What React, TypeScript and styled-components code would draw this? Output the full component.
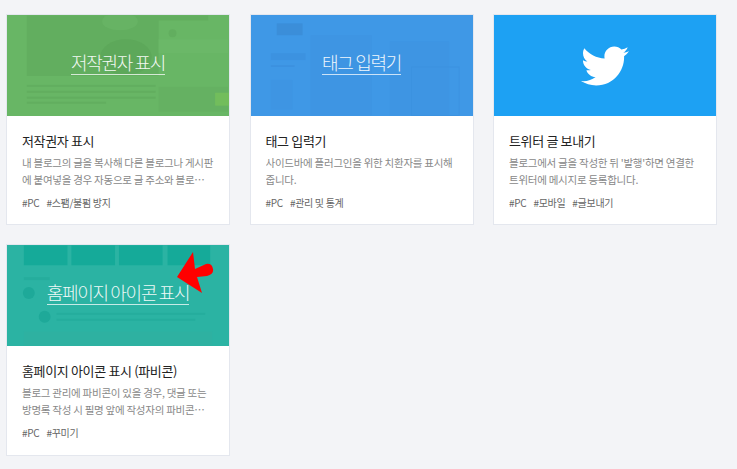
import { ReactNode } from "react"
import styled, { createGlobalStyle } from "styled-components"
import { FaTwitter } from "react-icons/fa"

const GlobalStyle = createGlobalStyle`
	html, body {
		margin: 0;
		background: #f3f4f7;
	}
	body {
		font-family: "Noto Sans CJK KR", "Noto Sans", sans-serif;
	}
`

const Grid = styled.div`
	display: grid;
	grid-template-columns: repeat(3, 224px);
	column-gap: 19.5px;
	row-gap: 19px;
	align-items: start;
	padding: 14px 0 0 6px;
`

const Card = styled.article<{ $tall?: boolean }>`
	box-sizing: border-box;
	height: ${(props) => (props.$tall ? "212px" : "211px")};
	background: #fff;
	border: 1px solid #e4e7ee;
	overflow: hidden;
`

const Thumb = styled.div<{ $color: string }>`
	position: relative;
	display: flex;
	justify-content: center;
	align-items: center;
	height: 101px;
	background: ${(props) => props.$color};
	overflow: hidden;
`

const Backdrop = styled.svg`
	position: absolute;
	inset: 0;
	width: 100%;
	height: 100%;
`

const ThumbTitle = styled.span`
	position: relative;
	margin-bottom: 5px;
	font-size: 18px;
	font-weight: 300;
	line-height: 23px;
	letter-spacing: -1.3px;
	color: #fff;
	opacity: 0.92;
	border-bottom: 1px solid rgba(255, 255, 255, 0.8);
`

const Body = styled.div`
	padding: 15px 15px 0;
`

const Title = styled.h3`
	margin: 0;
	font-size: 13px;
	font-weight: 400;
	line-height: 19px;
	letter-spacing: -0.35px;
	color: #222;
`

const Description = styled.p`
	display: -webkit-box;
	-webkit-box-orient: vertical;
	-webkit-line-clamp: 2;
	overflow: hidden;
	height: 34px;
	margin: 4px 0 0;
	font-size: 10.5px;
	line-height: 17px;
	letter-spacing: -0.26px;
	color: #888;
`

const Tags = styled.div`
	display: flex;
	gap: 7px;
	margin-top: 7px;
	font-size: 10px;
	line-height: 16px;
	letter-spacing: -0.3px;
	color: #666;
`

const Arrow = styled.svg`
	position: absolute;
	left: 170px;
	top: 7px;
	width: 46px;
	height: 50px;
`

const Bird = styled(FaTwitter)`
	position: relative;
	width: 48px;
	height: 48px;
	color: #fff;
`

const GreenBackdrop = () => (
	<Backdrop viewBox="0 0 224 101">
		<path d="M20 0 H203 V5 H153 V61 H20 Z" fill="#62ae5f" />
		<ellipse cx="114" cy="6" rx="18" ry="9" fill="#67b364" />
		<ellipse cx="120" cy="42" rx="26" ry="18" fill="#5da85a" />
		<rect x="153" y="24" width="70" height="14" fill="#6bb868" />
		<circle cx="167" cy="18" r="4" fill="#62ae5f" />
		<rect x="153" y="72" width="70" height="25" fill="#65b162" />
		<rect x="20" y="70" width="130" height="2" fill="#62ae5f" />
		<rect x="20" y="76" width="130" height="2" fill="#62ae5f" />
		<rect x="20" y="82" width="130" height="2" fill="#62ae5f" />
		<rect x="20" y="87" width="80" height="2" fill="#62ae5f" />
		<rect x="210" y="78" width="15" height="13" fill="#72bd5c" />
	</Backdrop>
)

const BlueBackdrop = () => (
	<Backdrop viewBox="0 0 224 101">
		<rect x="26" y="8" width="26" height="12" fill="#3b8ed9" />
		<rect x="20" y="38" width="35" height="7" fill="#3c92e0" />
		<rect x="60" y="20" width="62" height="81" fill="#3e95e3" />
		<rect x="140" y="26" width="60" height="75" fill="#3e95e3" />
		<rect x="162" y="52" width="48" height="49" fill="none" stroke="#3c92e0" />
		<rect x="20" y="50" width="24" height="2" fill="#3c92e0" />
		<rect x="20" y="65" width="22" height="30" fill="#3e95e3" />
	</Backdrop>
)

const TealBackdrop = () => (
	<Backdrop viewBox="0 0 224 101">
		<rect x="17" y="0" width="44" height="20" fill="#15aa99" />
		<rect x="65" y="0" width="44" height="20" fill="#15aa99" />
		<rect x="113" y="0" width="44" height="20" fill="#15aa99" />
		<rect x="162" y="0" width="43" height="20" fill="#15aa99" />
		<circle cx="22" cy="48" r="6" fill="#1ea999" />
		<circle cx="38" cy="72" r="6" fill="#1ea999" />
		<rect x="50" y="68" width="150" height="2" fill="#25ad9d" />
		<rect x="50" y="74" width="140" height="2" fill="#25ad9d" />
		<rect x="17" y="87" width="190" height="14" fill="#2eb1a1" />
		<rect x="17" y="32" width="26" height="3" fill="#25ad9d" />
	</Backdrop>
)

const RedArrow = () => (
	<Arrow viewBox="0 0 46 50">
		<path
			d="M16 0 L0 25 L25 41 L20 25 L30 24 Q37 22 36 17 Q35 11 29 12 L18 17 Z"
			fill="#f00"
		/>
	</Arrow>
)

type PluginProps = {
	color: string
	label?: string
	backdrop?: ReactNode
	overlay?: ReactNode
	name: string
	text: string
	tags: string[]
	tall?: boolean
}

const PluginCard = ({ color, label, backdrop, overlay, name, text, tags, tall }: PluginProps) => (
	<Card $tall={tall}>
		<Thumb $color={color}>
			{backdrop}
			{label ? <ThumbTitle>{label}</ThumbTitle> : <Bird />}
			{overlay}
		</Thumb>
		<Body>
			<Title>{name}</Title>
			<Description>{text}</Description>
			<Tags>
				{tags.map((tag) => (
					<span key={tag}>{tag}</span>
				))}
			</Tags>
		</Body>
	</Card>
)

const App = () => {
	return (
		<>
			<GlobalStyle />
			<Grid>
				<PluginCard
					color="#68b665"
					label="저작권자 표시"
					backdrop={<GreenBackdrop />}
					name="저작권자 표시"
					text="내 블로그의 글을 복사해 다른 블로그나 게시판에 붙여넣을 경우 자동으로 글 주소와 블로그 이름을 함께 표시합니다."
					tags={["#PC", "#스팸/불펌 방지"]}
				/>
				<PluginCard
					color="#3f98e6"
					label="태그 입력기"
					backdrop={<BlueBackdrop />}
					name="태그 입력기"
					text="사이드바에 플러그인을 위한 치환자를 표시해 줍니다."
					tags={["#PC", "#관리 및 통계"]}
				/>
				<PluginCard
					color="#1da1f3"
					name="트위터 글 보내기"
					text="블로그에서 글을 작성한 뒤 '발행'하면 연결한 트위터에 메시지로 등록합니다."
					tags={["#PC", "#모바일", "#글보내기"]}
				/>
				<PluginCard
					color="#2bb3a3"
					label="홈페이지 아이콘 표시"
					backdrop={<TealBackdrop />}
					overlay={<RedArrow />}
					name="홈페이지 아이콘 표시 (파비콘)"
					text="블로그 관리에 파비콘이 있을 경우, 댓글 또는 방명록 작성 시 필명 앞에 작성자의 파비콘을 함께 표시합니다."
					tags={["#PC", "#꾸미기"]}
					tall
				/>
			</Grid>
		</>
	)
}

export default App
